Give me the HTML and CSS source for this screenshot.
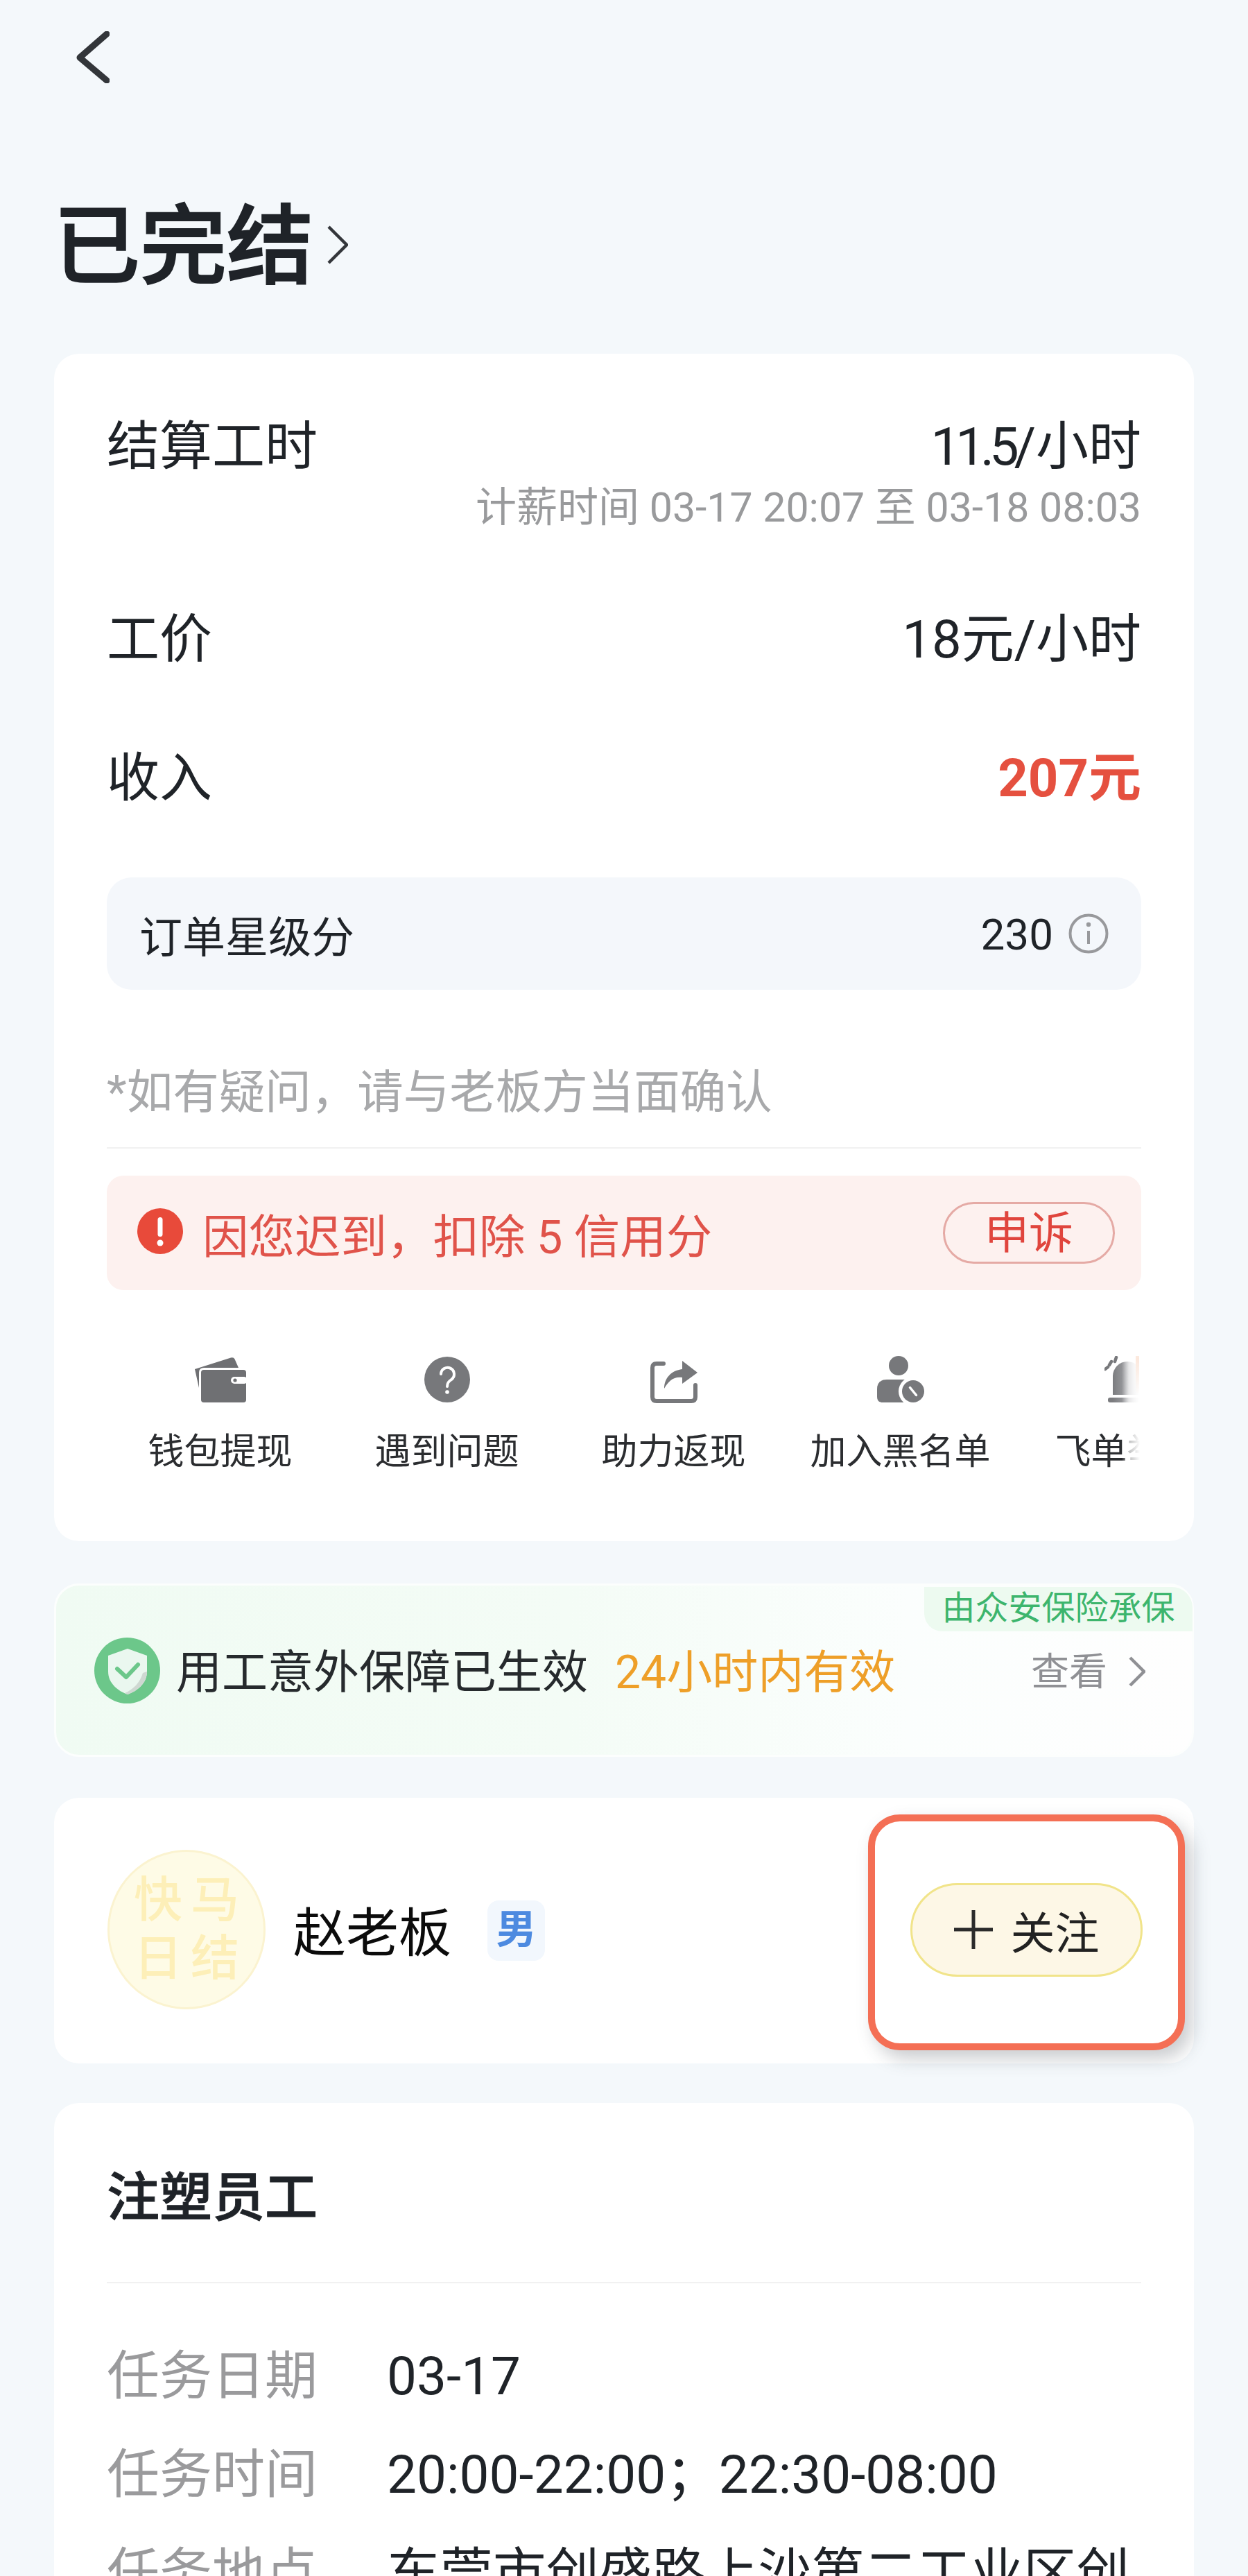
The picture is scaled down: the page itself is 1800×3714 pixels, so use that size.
FILE: index.html
```html
<!DOCTYPE html>
<html lang="zh-CN">
<head>
<meta charset="utf-8">
<title>已完结</title>
<link rel="stylesheet" href="styles.css">
</head>
<body>
<main class="page">
  <header class="topbar">
    <svg class="back" viewBox="0 0 48 75"><path d="M44 4 L5 38 L44 71"/></svg>
  </header>
  <div class="status">
    <h1 class="status-title">已完结</h1>
    <svg class="status-arrow" viewBox="0 0 30 56"><path d="M2 2 L28 28 L2 54"/></svg>
  </div>

  <section class="card order">
    <div class="row row-first"><span>结算工时</span><span><span class="tight">11.5/</span>小时</span></div>
    <div class="pay-time">计薪时间 03-17 20:07 至 03-18 08:03</div>
    <div class="row row-wage"><span>工价</span><span>18元/小时</span></div>
    <div class="row row-income"><span>收入</span><span class="income">207元</span></div>
    <div class="score">
      <span>订单星级分</span>
      <span class="score-value">230
        <svg class="info" viewBox="0 0 58 58"><circle cx="29" cy="29" r="26.5"/><circle class="info-dot" cx="29" cy="16" r="3.2"/><path d="M29 25 V44"/></svg>
      </span>
    </div>
    <p class="note">*如有疑问，请与老板方当面确认</p>
    <div class="divider"></div>
    <div class="penalty">
      <svg class="alert" viewBox="0 0 66 66"><circle cx="33" cy="33" r="33"/><rect x="29.5" y="13" width="7" height="28" rx="3.5"/><circle cx="33" cy="50" r="4.5"/></svg>
      <span class="penalty-text">因您迟到，扣除 5 信用分</span>
      <span class="appeal">申诉</span>
    </div>
    <div class="actions">
      <div class="action">
        <svg class="action-icon" viewBox="0 0 74 68"><path class="wallet" d="M0 19 L52 2.5 Q56 1.5 57.500 4.500 L63 17 H13 Q6 17 6 24 V46 Z"/><rect class="wallet" x="9" y="20" width="65" height="47" rx="4"/><rect class="cut" x="52" y="30" width="24" height="10" rx="5"/><circle class="wallet" cx="58" cy="35" r="2.600"/></svg>
        <span>钱包提现</span>
      </div>
      <div class="action">
        <svg class="action-icon" viewBox="0 0 66 68"><circle class="gray" cx="33" cy="34" r="33"/><path class="line-white" d="M24 26 a9.500 9.500 0 1 1 15 8 c-4 3 -6 5 -6 10"/><circle class="white" cx="33" cy="52" r="2.800"/></svg>
        <span>遇到问题</span>
      </div>
      <div class="action">
        <svg class="action-icon" viewBox="0 0 68 68"><path class="line-gray" d="M19 11 H9 Q3 11 3 17 V59 Q3 65 9 65 H59 Q65 65 65 59 V42"/><path class="gray" d="M20 47 C20 32 30 21 46 19 V7 L68 24 L46 40 V31 C34 29 26 36 20 47 Z"/></svg>
        <span>助力返现</span>
      </div>
      <div class="action">
        <svg class="action-icon" viewBox="0 0 68 68"><circle class="gray" cx="31" cy="14" r="14"/><path class="gray" d="M0 48 Q0 34 14 34 H48 V67 H8 Q0 67 0 59 Z"/><circle class="white" cx="52" cy="51" r="21"/><circle class="gray" cx="52" cy="51" r="16"/><path class="line-white-thin" d="M47.500 45.500 L56.500 56.500"/></svg>
        <span>加入黑名单</span>
      </div>
      <div class="action">
        <svg class="action-icon" viewBox="0 0 66 68">
          <defs><linearGradient id="siren-fade" gradientUnits="userSpaceOnUse" x1="12" y1="0" x2="52" y2="0"><stop offset="0" stop-color="#7b7c7f"/><stop offset=".4" stop-color="#98999c"/><stop offset="1" stop-color="#e4e4e5"/></linearGradient></defs>
          <path class="siren" d="M12 56 V29 a21 21 0 0 1 42 0 V56 Z"/><rect class="siren" x="5" y="60" width="56" height="7" rx="3"/><path class="rays" d="M1 19 L5 16 M7 13 L10 8 M15 8 L17 2"/></svg>
        <span>飞单举报</span>
      </div>
      <div class="fade"></div>
    </div>
  </section>

  <section class="card cover">
    <svg class="shield" viewBox="0 0 95 97"><circle class="shield-bg" cx="47.500" cy="48.500" r="47.500"/><path class="shield-body" d="M48 17 L76 27 V50 C76 67 62 78 48 83 C34 78 20 67 20 50 V27 Z"/><path class="shield-shade" d="M70 52 C66 66 56 76 44 81 L48 83 C62 78 76 67 76 50 Z"/><path class="shield-check" d="M33 46 L46 58 L63 40"/></svg>
    <span class="cover-text">用工意外保障已生效</span>
    <span class="cover-time">24小时内有效</span>
    <span class="cover-link">查看
      <svg class="cover-arrow" viewBox="0 0 24 44"><path d="M2 2 L22 22 L2 42"/></svg>
    </span>
    <span class="cover-tag">由众安保险承保</span>
  </section>

  <section class="card boss">
    <div class="avatar"><span>快马</span><span>日结</span></div>
    <span class="boss-name">赵老板</span>
    <span class="gender">男</span>
    <div class="follow-frame">
      <div class="follow">
        <svg class="plus" viewBox="0 0 56 56"><path d="M0 28 H56 M28 0 V56"/></svg>
        <span>关注</span>
      </div>
    </div>
  </section>

  <section class="card task">
    <h2 class="task-title">注塑员工</h2>
    <div class="divider task-divider"></div>
    <dl class="task-list">
      <dt>任务日期</dt><dd>03-17</dd>
      <dt>任务时间</dt><dd>20:00-22:00；22:30-08:00</dd>
      <dt>任务地点</dt><dd>东莞市创盛路上沙第二工业区创</dd>
    </dl>
  </section>
</main>
</body>
</html>
```

FILE: styles.css
```css
* { box-sizing: border-box; }
html, body {
  margin: 0;
  padding: 0;
  height: 3714px;
  overflow: hidden;
  background: #f4f8fb;
}
body {
  font-family: Roboto, "Noto Sans CJK SC", sans-serif;
  color: #1f2328;
}
.page {
  display: flex;
  flex-direction: column;
  width: 1800px;
  height: 3714px;
  overflow: hidden;
}
.topbar { flex: none; padding: 45px 0 0 110px; height: 290px; }
.back { display: block; width: 48px; height: 75px; }
.back path { fill: none; stroke: #33363a; stroke-width: 9; stroke-linecap: round; stroke-linejoin: round; }

.status { flex: none; display: flex; align-items: center; height: 130px; padding-left: 77px; margin-bottom: 90px; }
.status-title { margin: 4px 0 0; font-size: 125px; line-height: 130px; font-weight: 500; -webkit-text-stroke: 2px #1f2328; }
.status-arrow { width: 30px; height: 56px; margin-left: 20px; margin-top: -4px; }
.status-arrow path { fill: none; stroke: #33363a; stroke-width: 4.500; }

.card {
  flex: none;
  width: 1644px;
  margin-left: 78px;
  background: #fff;
  border-radius: 36px;
}
.order { padding: 84px 76px 93px; }
.row {
  display: flex;
  justify-content: space-between;
  font-size: 76px;
  line-height: 100px;
}
.tight { letter-spacing: -7px; margin-right: 7px; }
.pay-time {
  text-align: right;
  font-size: 59px;
  line-height: 60px;
  margin-top: 8px;
  color: #999a9c;
}
.row-wage { margin-top: 110px; }
.row-income { margin-top: 100px; }
.income { font-weight: 700; color: #e5503f; }

.score {
  display: flex;
  justify-content: space-between;
  align-items: center;
  height: 162px;
  margin-top: 93px;
  padding: 2px 47px 0;
  background: #f4f7fb;
  border-radius: 36px;
  font-size: 62px;
}
.score-value { display: flex; align-items: center; gap: 22px; }
.info { width: 58px; height: 58px; margin-top: -3px; }
.info circle, .info path { fill: none; stroke: #98999c; stroke-width: 4; }
.info .info-dot { fill: #98999c; stroke: none; }

.note { margin: 103px 0 0; font-size: 66.500px; line-height: 90px; color: #a8a9ab; }
.divider { height: 2px; background: #f1f1f1; }
.order .divider { margin-top: 34px; }

.penalty {
  display: flex;
  align-items: center;
  height: 165px;
  margin-top: 39px;
  padding: 0 38px 0 44px;
  background: #fdf1ef;
  border-radius: 24px;
  color: #e0534a;
}
.alert { flex: none; width: 66px; height: 66px; margin-top: -5px; }
.alert circle:first-child { fill: #e84a3a; }
.alert rect, .alert circle { fill: #fff; }
.penalty-text { margin: 12px 0 0 28px; font-size: 66.500px; line-height: 90px; }
.appeal {
  margin-left: auto;
  width: 248px;
  height: 89px;
  border: 3px solid #e5aaa5;
  border-radius: 45px;
  text-align: center;
  font-size: 64px;
  line-height: 86px;
  color: #e0453d;
}

.actions {
  position: relative;
  display: flex;
  width: 1490px;
  margin-top: 95px;
  overflow: hidden;
}
.action {
  flex: 0 0 327px;
  display: flex;
  flex-direction: column;
  align-items: center;
  font-size: 52px;
  line-height: 70px;
  color: #2b2d30;
}
.action span { white-space: nowrap; margin-top: 36px; }
.action-icon { display: block; width: auto; height: 68px; }
.wallet { fill: #6f7073; }
.cut { fill: #fff; }
.gray { fill: #77787b; }
.white { fill: #fff; }
.siren { fill: url(#siren-fade); }
.line-white { fill: none; stroke: #fff; stroke-width: 4; stroke-linecap: round; }
.line-white-thin { fill: none; stroke: #fff; stroke-width: 3.500; stroke-linecap: round; }
.line-gray { fill: none; stroke: #77787b; stroke-width: 6; stroke-linecap: round; }
.rays { fill: none; stroke: #77787b; stroke-width: 4.500; stroke-linecap: round; }
.fade {
  position: absolute;
  top: -30px;
  right: 0;
  width: 26px;
  height: 260px;
  background: linear-gradient(90deg, rgba(255,255,255,0) 0%, rgba(255,255,255,.7) 40%, #fff 100%);
}
.fade::after {
  content: "";
  position: absolute;
  top: 0;
  right: 1px;
  width: 5px;
  height: 85px;
  background: linear-gradient(180deg, rgba(252,232,220,0), #fce8dc 40%, rgba(252,232,220,0));
}

.cover {
  position: relative;
  display: flex;
  align-items: center;
  height: 250px;
  margin-top: 61px;
  padding: 0 70px 0 58px;
  border: 3px solid #fcfefd;
  background: linear-gradient(90deg, #f0fbf3 0%, #f4fcf6 45%, #fbfefd 75%, #fefefe 100%);
  font-size: 66px;
  line-height: 90px;
}
.shield { flex: none; width: 95px; height: 97px; margin-left: -3px; }
.shield-bg { fill: #6cc78a; }
.shield-body { fill: #eaf7ef; }
.shield-shade { fill: #cfd8d2; }
.shield-check { fill: none; stroke: #6cc78a; stroke-width: 6; stroke-linecap: round; stroke-linejoin: round; }
.cover-text { margin: 8px 0 0 23px; color: #262a2d; }
.cover-time { margin: 8px 0 0 39px; color: #ee9f28; }
.cover-link {
  display: flex;
  align-items: center;
  gap: 31px;
  margin: 4px -3px 0 auto;
  font-size: 55px;
  color: #8f9094;
}
.cover-arrow { width: 24px; height: 44px; }
.cover-arrow path { fill: none; stroke: #8f9094; stroke-width: 4.500; }
.cover-tag {
  position: absolute;
  top: 2px;
  right: -1px;
  width: 387px;
  height: 64px;
  background: #edfaf0;
  border-radius: 0 30px 0 26px;
  color: #3db56d;
  font-size: 48px;
  line-height: 62px;
  text-align: center;
}

.boss {
  display: flex;
  align-items: center;
  height: 383px;
  margin-top: 59px;
  padding: 0 13px 0 77px;
}
.avatar {
  flex: none;
  display: flex;
  flex-direction: column;
  align-items: center;
  justify-content: center;
  width: 228px;
  height: 230px;
  margin-top: -3px;
  border: 3px solid #fbf3d0;
  border-radius: 50%;
  background: #fefbe6;
  color: #fdefb8;
  font-size: 70px;
  line-height: 84px;
  font-weight: 500;
  letter-spacing: 12px;
}
.avatar span { padding-left: 12px; }
.boss-name { margin-left: 40px; font-size: 76px; line-height: 100px; color: #0c0c0c; margin-top: 8px; }
.gender {
  width: 83px;
  height: 87px;
  margin-left: 52px;
  border-radius: 16px;
  background: #f2f7fd;
  color: #4d8ae0;
  font-size: 58px;
  font-weight: 700;
  line-height: 84px;
  text-align: center;
}
.follow-frame {
  display: flex;
  align-items: center;
  justify-content: center;
  width: 457px;
  height: 340px;
  margin-left: auto;
  margin-top: 5px;
  padding-bottom: 8px;
  border: 10px solid #f46f55;
  border-radius: 46px;
  background: #fff;
  box-shadow: 10px 12px 26px rgba(60, 70, 80, .28);
}
.follow {
  display: flex;
  align-items: center;
  justify-content: center;
  gap: 26px;
  width: 335px;
  height: 135px;
  border: 3px solid #f1e48a;
  border-radius: 68px;
  background: #fdf7e6;
  font-size: 64px;
  color: #222;
}
.plus { width: 56px; height: 56px; }
.plus path { fill: none; stroke: #2b2b2b; stroke-width: 5; stroke-linecap: round; }

.task { margin-top: 57px; padding: 87px 76px 0; height: 1000px; }
.task-title { margin: 0; font-size: 76px; line-height: 100px; font-weight: 500; -webkit-text-stroke: 1px #1f2328; }
.task-divider { margin-top: 71px; }
.task-list {
  display: grid;
  grid-template-columns: 404px 1fr;
  row-gap: 42px;
  margin: 84px 0 0;
  font-size: 76px;
  line-height: 100px;
}
.task-list dt { color: #9a9a9c; }
.task-list dd { margin: 0; white-space: nowrap; font-size: 76.500px; }
```
